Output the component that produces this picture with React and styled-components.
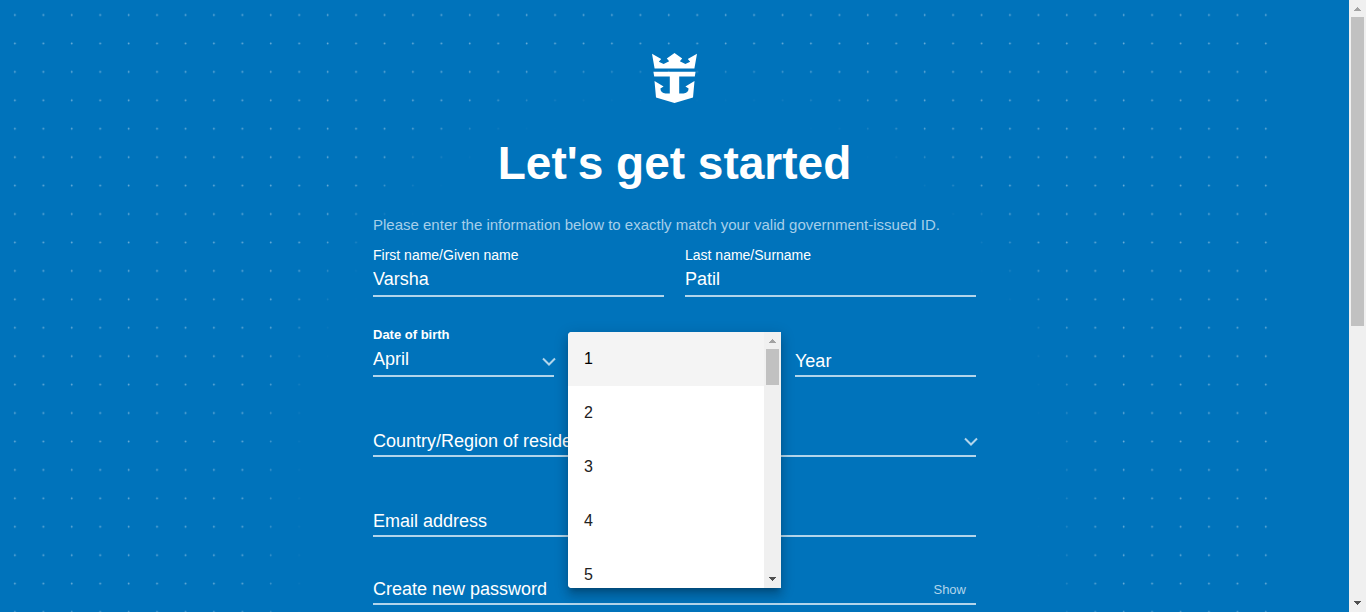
import React from "react";
import styled, { createGlobalStyle } from "styled-components";

const GlobalStyle = createGlobalStyle`
  *, *::before, *::after { box-sizing: border-box; }
  body {
    margin: 0;
    background: #0073bb;
    color: #fff;
    font-family: "Liberation Sans", Arial, sans-serif;
  }
`;

const Window = styled.div`
  display: flex;
  height: 100vh;
  overflow: hidden;
`;

const Page = styled.main`
  position: relative;
  flex: 1;
  min-width: 0;
  height: 100%;
  overflow: hidden;
  display: flex;
  flex-direction: column;
  align-items: center;
  padding: 53px 20px 0;
`;

const Backdrop = styled.svg`
  position: absolute;
  inset: 0;
  width: 100%;
  height: 100%;
  pointer-events: none;
`;

const Logo = styled.svg`
  position: relative;
  flex: none;
  width: 45px;
  height: 50px;
  fill: #fff;
`;

const Title = styled.h1`
  position: relative;
  margin: 34px 0 26px;
  font-size: 46px;
  line-height: 52px;
  font-weight: 700;
`;

const Form = styled.form`
  position: relative;
  width: 100%;
  max-width: 603px;
  display: flex;
  flex-direction: column;
  gap: 30px;
`;

const Intro = styled.p`
  margin: 0 0 -18px;
  font-size: 15px;
  line-height: 20px;
  color: #a6cfea;
`;

const Row = styled.div`
  display: grid;
  grid-template-columns: repeat(${(p) => p.$columns}, minmax(0, 1fr));
  align-items: end;
  column-gap: ${(p) => p.$gap}px;
`;

const Field = styled.div`
  position: relative;
  display: flex;
  flex-direction: column;
  justify-content: flex-end;
  min-height: ${(p) => (p.$compact ? 38 : 50)}px;
`;

const Label = styled.label`
  font-size: ${(p) => (p.$strong ? 13 : 14)}px;
  font-weight: ${(p) => (p.$strong ? 700 : 400)};
  line-height: 16px;
`;

const Control = styled.div`
  position: relative;
  display: flex;
  align-items: center;
  height: 34px;
  padding-top: ${(p) => (p.$empty ? 4 : 0)}px;
  border-bottom: 2px solid #b2d5eb;
`;

const Input = styled.input`
  flex: 1;
  min-width: 0;
  height: 28px;
  padding: 0;
  border: 0;
  outline: 0;
  background: transparent;
  color: #fff;
  font: 18px "Liberation Sans", Arial, sans-serif;
  &::placeholder { color: #fff; opacity: 1; }
`;

const Select = styled.select`
  appearance: none;
  flex: 1;
  min-width: 0;
  height: 28px;
  padding: 0;
  border: 0;
  outline: 0;
  background: transparent;
  color: #fff;
  font: 18px "Liberation Sans", Arial, sans-serif;
`;

const DayButton = styled.button`
  flex: 1;
  height: 28px;
  padding: 0;
  border: 0;
  background: transparent;
  color: #fff;
  text-align: left;
  font: 18px "Liberation Sans", Arial, sans-serif;
`;

const ShowButton = styled.button`
  margin-right: 10px;
  padding: 0;
  border: 0;
  background: transparent;
  color: #b2d5eb;
  font: 13px "Liberation Sans", Arial, sans-serif;
`;

const ChevronIcon = styled.svg`
  position: absolute;
  right: -2px;
  bottom: 8px;
  width: 14px;
  height: 10px;
  fill: none;
  stroke: #b2d5eb;
  stroke-width: 2;
  pointer-events: none;
`;

const Menu = styled.div`
  position: absolute;
  z-index: 2;
  top: 5px;
  left: -16px;
  right: -16px;
  height: 256px;
  display: flex;
  overflow: hidden;
  background: #fff;
  border-radius: 4px 0 0 4px;
  box-shadow: 0 5px 5px -3px rgba(0, 0, 0, 0.2), 0 8px 10px 1px rgba(0, 0, 0, 0.14),
    0 3px 14px 2px rgba(0, 0, 0, 0.12);
`;

const Options = styled.ul`
  flex: 1;
  margin: 0;
  padding: 0;
  overflow: hidden;
  list-style: none;
`;

const Option = styled.li`
  padding: 0 16px;
  font-size: 16px;
  line-height: 54px;
  color: ${(p) => (p.$active ? "#000" : "#212121")};
  background: ${(p) => (p.$active ? "#f4f4f4" : "#fff")};
`;

const Scrollbar = styled.div`
  flex: none;
  display: flex;
  flex-direction: column;
  width: 17px;
  height: 100%;
  background: #f0f0f0;
`;

const Arrow = styled.svg`
  flex: none;
  width: 17px;
  height: 17px;
  fill: ${(p) => (p.$dim ? "#a3a3a3" : "#505050")};
`;

const Track = styled.div`
  flex: 1;
  padding: 0 2px;
`;

const Thumb = styled.div`
  height: ${(p) => p.$share}%;
  background: #c1c1c1;
`;

function ScrollRail({ share }) {
  return (
    <Scrollbar aria-hidden="true">
      <Arrow $dim viewBox="0 0 17 17" shapeRendering="crispEdges">
        <path d="M8 7h1v1h1v1h1v1h1v1H5v-1h1V9h1V8h1z" />
      </Arrow>
      <Track>
        <Thumb $share={share} />
      </Track>
      <Arrow viewBox="0 0 17 17" shapeRendering="crispEdges">
        <path d="M5 6h7v1h-1v1h-1v1H9v1H8V9H7V8H6V7H5z" />
      </Arrow>
    </Scrollbar>
  );
}

function Chevron() {
  return (
    <ChevronIcon viewBox="0 0 14 10" aria-hidden="true">
      <path d="M1 1.5 7 7.5 13 1.5" />
    </ChevronIcon>
  );
}

function DotBackdrop() {
  return (
    <Backdrop aria-hidden="true">
      <defs>
        <pattern id="dots" x="0.5" y="0.8" width="28.43" height="28.43" patternUnits="userSpaceOnUse">
          <circle cx="14.4" cy="14.2" r="0.9" fill="#fff" fillOpacity="0.42" />
        </pattern>
        <filter id="soften" x="-20%" y="-20%" width="140%" height="140%">
          <feGaussianBlur stdDeviation="19" />
        </filter>
        <mask id="clearing" maskUnits="userSpaceOnUse" x="0" y="0" width="1280" height="4000">
          <rect width="1280" height="4000" fill="#fff" />
          <rect x="276" y="68" width="798" height="1600" rx="399" fill="#000" filter="url(#soften)" />
        </mask>
      </defs>
      <rect width="1280" height="100%" fill="url(#dots)" mask="url(#clearing)" />
    </Backdrop>
  );
}

function CrownAnchor() {
  return (
    <Logo viewBox="0 0 45 50" role="img" aria-label="Crown and anchor">
      <path d="M0 .8 9.2 6 6.8 8.8 11.6 11 17.2 8.2 14.8 5.6 22.5 0 30.2 5.6 27.8 8.2 33.4 11 38.2 8.8 35.8 6 45 .8 42.4 15.6H2.6z" />
      <path d="M1.4 18.7H43.6L42.8 23.6H27.2V40.6H31.4C34.6 40.4 36.6 38.4 36.6 35.6L33.4 33.6 42.5 28 41 44.4 22.5 50 4 44.4 2.5 28 11.6 33.6 8.4 35.6C8.4 38.4 10.4 40.4 13.6 40.6H17.8V23.6H2.2z" />
    </Logo>
  );
}

const days = ["1", "2", "3", "4", "5"];

export default function App() {
  return (
    <Window>
      <GlobalStyle />
      <Page>
        <DotBackdrop />
        <CrownAnchor />
        <Title>Let's get started</Title>
        <Form>
          <Intro>Please enter the information below to exactly match your valid government-issued ID.</Intro>
          <Row $columns={2} $gap={21}>
            <Field>
              <Label htmlFor="first">First name/Given name</Label>
              <Control>
                <Input id="first" defaultValue="Varsha" />
              </Control>
            </Field>
            <Field>
              <Label htmlFor="last">Last name/Surname</Label>
              <Control>
                <Input id="last" defaultValue="Patil" />
              </Control>
            </Field>
          </Row>
          <Row $columns={3} $gap={30}>
            <Field>
              <Label $strong htmlFor="month">Date of birth</Label>
              <Control>
                <Select id="month" defaultValue="April">
                  <option>April</option>
                </Select>
                <Chevron />
              </Control>
            </Field>
            <Field>
              <Control $empty>
                <DayButton type="button" aria-label="Day" aria-haspopup="listbox" aria-expanded="true" />
              </Control>
              <Menu>
                <Options role="listbox" aria-label="Day">
                  {days.map((day, i) => (
                    <Option key={day} role="option" aria-selected={i === 0} $active={i === 0}>
                      {day}
                    </Option>
                  ))}
                </Options>
                <ScrollRail share={16} />
              </Menu>
            </Field>
            <Field>
              <Control $empty>
                <Input aria-label="Year" placeholder="Year" />
              </Control>
            </Field>
          </Row>
          <Field>
            <Control $empty>
              <Select aria-label="Country/Region of residence" defaultValue="">
                <option value="">Country/Region of residence</option>
              </Select>
              <Chevron />
            </Control>
          </Field>
          <Field>
            <Control $empty>
              <Input type="email" aria-label="Email address" placeholder="Email address" />
            </Control>
          </Field>
          <Field $compact>
            <Control $empty>
              <Input type="password" aria-label="Create new password" placeholder="Create new password" />
              <ShowButton type="button">Show</ShowButton>
            </Control>
          </Field>
        </Form>
      </Page>
      <ScrollRail share={53.5} />
    </Window>
  );
}
